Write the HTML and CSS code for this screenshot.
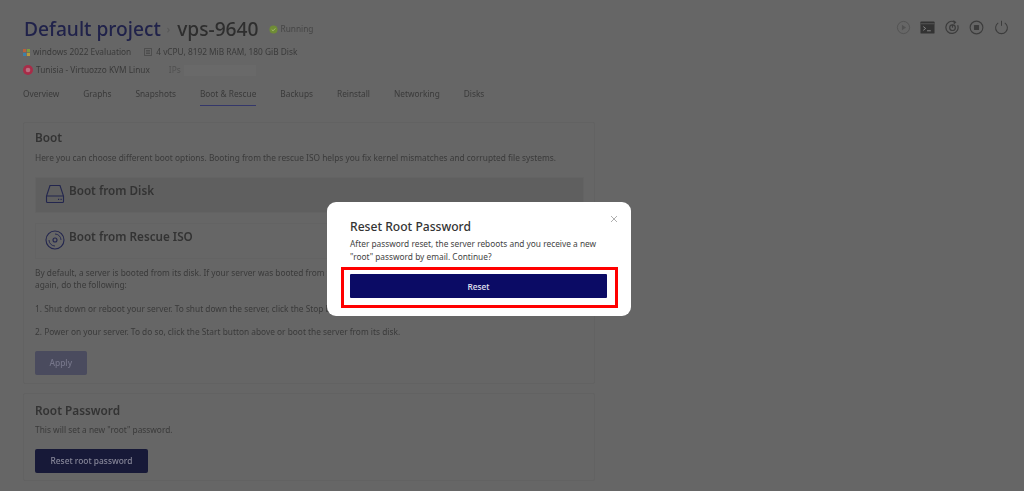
FILE: index.html
```html
<!DOCTYPE html>
<html lang="en">
<head>
<meta charset="utf-8">
<title>vps-9640</title>
<link rel="stylesheet" href="styles.css">
</head>
<body>
<div class="page">
  <header class="head">
    <div class="head-main">
      <h1 class="title"><span class="project">Default project</span><span class="sep">›</span><span class="name">vps-9640</span>
        <span class="status"><svg class="status-dot" viewBox="0 0 10 10"><circle cx="5" cy="5" r="4.5" fill="#6f8c36"/><path d="M3 5l1.5 1.5L7 3.8" stroke="#a8c070" fill="none"/></svg>Running</span>
      </h1>
      <div class="meta">
        <span class="meta-item"><svg class="win" viewBox="0 0 8 8"><rect width="3.6" height="3.6" fill="#b8603c"/><rect x="4.4" width="3.6" height="3.6" fill="#7c9a40"/><rect y="4.4" width="3.6" height="3.6" fill="#3c80a8"/><rect x="4.4" y="4.4" width="3.6" height="3.6" fill="#b89a3c"/></svg>windows 2022 Evaluation</span>
        <span class="meta-item spec"><svg class="spec-icon" viewBox="0 0 8 8"><path d="M.5.5h7v7h-7zM2 2.5h4M2 4h4M2 5.5h4" fill="none" stroke="#3e3e3e" stroke-width=".6"/></svg>4 vCPU, 8192 MiB RAM, 180 GiB Disk</span>
      </div>
      <div class="meta">
        <span class="meta-item"><svg class="flag" viewBox="0 0 10 10"><circle cx="5" cy="5" r="5" fill="#a82c48"/><circle cx="5" cy="5" r="2.3" fill="#b87080"/></svg>Tunisia - Virtuozzo KVM Linux</span>
        <span class="ips">IPs <span class="ip-mask"></span></span>
      </div>
    </div>
    <div class="actions">
      <svg class="act" viewBox="0 0 16 16"><circle cx="8" cy="8" r="6.5" fill="none" stroke="#525252" stroke-width="1"/><path d="M6.3 5l4.4 3-4.4 3z" fill="#525252"/></svg>
      <svg class="act" viewBox="0 0 16 16"><rect x=".5" y="1.5" width="15" height="13" rx="1" fill="#333"/><path d="M1 4h14" stroke="#666" stroke-width=".7"/><path d="M3.5 7l2.5 2-2.5 2M7.5 11.5h4" stroke="#8a8a8a" fill="none" stroke-width="1"/></svg>
      <svg class="act" viewBox="0 0 16 16"><path d="M13.5 5.5A6.5 6.5 0 1 1 9.5 1.7" fill="none" stroke="#3c3c3c" stroke-width="1.3"/><path d="M9 0l3.2 2.3L9.4 4.8z" fill="#3c3c3c"/><circle cx="8" cy="8.2" r="3" fill="none" stroke="#3c3c3c" stroke-width="1.3"/><path d="M8 5v3.2" stroke="#3c3c3c" stroke-width="1.3"/></svg>
      <svg class="act" viewBox="0 0 16 16"><circle cx="8" cy="8" r="6.8" fill="none" stroke="#3c3c3c" stroke-width="1.2"/><rect x="5.3" y="5.3" width="5.4" height="5.4" rx=".6" fill="#3c3c3c"/></svg>
      <svg class="act" viewBox="0 0 16 16"><path d="M4.5 3A6.3 6.3 0 1 0 11.5 3" fill="none" stroke="#3c3c3c" stroke-width="1.1"/><path d="M8 .8v5.4" stroke="#3c3c3c" stroke-width="1.1"/></svg>
    </div>
  </header>

  <nav class="tabs">
    <a class="tab">Overview</a>
    <a class="tab">Graphs</a>
    <a class="tab">Snapshots</a>
    <a class="tab active">Boot &amp; Rescue</a>
    <a class="tab">Backups</a>
    <a class="tab">Reinstall</a>
    <a class="tab">Networking</a>
    <a class="tab">Disks</a>
  </nav>

  <main class="content">
    <section class="card boot">
      <h2 class="card-title">Boot</h2>
      <p class="text">Here you can choose different boot options. Booting from the rescue ISO helps you fix kernel mismatches and corrupted file systems.</p>
      <div class="option selected">
        <svg class="opt-icon" viewBox="0 0 20 20"><path d="M5 1.5h10l3.5 10.5v5.5a1 1 0 0 1-1 1h-15a1 1 0 0 1-1-1V12z M1.5 12h17" fill="none" stroke="#23264e" stroke-width="1.1"/><path d="M13 15.3h1.2M15.5 15.3h1.2" stroke="#23264e" stroke-width="1.2"/></svg>
        <span>Boot from Disk</span>
      </div>
      <div class="option">
        <svg class="opt-icon" viewBox="0 0 20 20"><circle cx="10" cy="10" r="9" fill="none" stroke="#23264e" stroke-width="1.1"/><circle cx="10" cy="10" r="2" fill="none" stroke="#23264e" stroke-width="1.1"/><path d="M4 10a6 6 0 0 0 6 6M16 10a6 6 0 0 0-6-6" fill="none" stroke="#23264e" stroke-width=".9"/></svg>
        <span>Boot from Rescue ISO</span>
      </div>
      <p class="text para">By default, a server is booted from its disk. If your server was booted from the rescue ISO and you want to boot it from its disk<br>again, do the following:</p>
      <p class="text para">1. Shut down or reboot your server. To shut down the server, click the Stop button above.</p>
      <p class="text para">2. Power on your server. To do so, click the Start button above or boot the server from its disk.</p>
      <button class="btn disabled">Apply</button>
    </section>
    <section class="card root">
      <h2 class="card-title">Root Password</h2>
      <p class="text">This will set a new "root" password.</p>
      <button class="btn primary">Reset root password</button>
    </section>
  </main>
</div>

<div class="modal">
  <svg class="close" viewBox="0 0 8 8"><path d="M1 1l6 6M7 1l-6 6" stroke="#9a9a9a" stroke-width=".8"/></svg>
  <h3 class="modal-title">Reset Root Password</h3>
  <p class="modal-text">After password reset, the server reboots and you receive a new "root" password by email. Continue?</p>
  <div class="highlight"><button class="modal-btn">Reset</button></div>
</div>
</body>
</html>
```
FILE: styles.css
```css
* { box-sizing: border-box; }
html, body { margin: 0; height: 100%; overflow: hidden; }
body { background: #666; font-family: "Noto Sans", "Open Sans", sans-serif; color: #3a3a3a; }

.page { padding: 16px 15.5px 0 23px; height: 491px; overflow: hidden; filter: blur(.45px); }
.head { display: flex; justify-content: space-between; }
.title { margin: 0; height: 26px; display: flex; align-items: center; font-size: 19.2px; line-height: 26px; font-weight: 500; white-space: nowrap; }
.project { color: #20224a; margin-left: 1px; }
.sep { color: #555; font-size: 11px; margin: 0 7px 0 6px; font-weight: 400; }
.name { color: #2e2e2e; }
.status { display: inline-flex; align-items: center; margin-left: 10px; font-size: 8.3px; font-weight: 400; color: #454545; }
.status-dot { width: 9px; height: 9px; margin-right: 3px; }

.meta { display: flex; align-items: center; font-size: 8.3px; line-height: 14px; color: #3a3a3a; }
.head-main .meta:nth-of-type(1) { margin-top: 3px; }
.head-main .meta + .meta { margin-top: 4px; }
.meta-item { display: inline-flex; align-items: center; }
.win { width: 7px; height: 7px; margin-right: 3px; }
.spec { margin-left: 13px; }
.spec-icon { width: 8px; height: 8px; margin-right: 4px; }
.flag { width: 10px; height: 10px; margin-right: 3px; }
.ips { display: inline-flex; align-items: center; margin-left: 19px; color: #505050; }
.ip-mask { display: inline-block; width: 72px; height: 11px; margin-left: 3px; background: #696969; }

.actions { display: flex; gap: 9.5px; padding-top: 4px; }
.act { width: 15px; height: 15px; }

.tabs { display: flex; gap: 24px; margin-top: 4px; font-size: 8.3px; line-height: 14px; color: #3a3a3a; }
.tab { padding: 6px 0 4px; border-bottom: 1px solid transparent; }
.tab.active { border-bottom-color: #34376a; }

.content { margin-top: 16px; }
.card { width: 572px; border: 1px solid #626262; border-radius: 2px; padding: 0 11px; }
.boot { height: 262px; padding-top: 6px; }
.root { height: 88px; margin-top: 9px; padding-top: 8px; }
.card-title { margin: 0; font-size: 11.8px; line-height: 17px; font-weight: 600; color: #333; }
.text { margin: 6px 0 0; font-size: 8.33px; line-height: 12.5px; color: #3a3a3a; white-space: nowrap; }
.root .text { margin-top: 5px; }
.option { display: flex; align-items: center; gap: 4px; height: 36px; margin-top: 10px; padding: 0 9px; width: 549px; border: 1px solid #636363; font-size: 11.7px; font-weight: 600; color: #333; }
.option span { position: relative; top: -4.5px; }
.option.selected { background: #5f5f5f; margin-top: 12px; }
.opt-icon { width: 20px; height: 20px; position: relative; top: -1px; }
.para { margin-top: 11px; }
.option + .para { margin-top: 8px; }
.btn { display: block; font-family: inherit; border: 0; border-radius: 2px; height: 24px; font-size: 8.4px; font-weight: 500; padding: 0 14.5px; }
.boot .btn { margin-top: 12px; }
.disabled { background: #4a4b5e; color: #76768a; }
.primary { background: #171938; color: #868698; margin-top: 12px; padding: 0 15.5px; }

.modal { position: fixed; left: 327px; top: 202px; width: 304px; height: 114px; background: #fff; border-radius: 9px; padding: 16px 23px 0; }
.close { position: absolute; top: 13px; right: 13px; width: 8px; height: 8px; }
.modal-title { margin: 0; font-size: 12.1px; line-height: 17px; font-weight: 500; color: #333; }
.modal-text { margin: 3px 0 0; font-size: 8.33px; line-height: 12.5px; color: #444; }
.highlight { position: absolute; left: 14px; top: 65px; width: 277px; height: 41px; border: 3px solid #f00; padding: 4px 8px 0 6px; }
.modal-btn { display: block; width: 100%; height: 24px; border: 0; border-radius: 1px; background: #0b0b65; color: #e8e8f4; font-family: inherit; font-size: 8.3px; font-weight: 500; }
```
